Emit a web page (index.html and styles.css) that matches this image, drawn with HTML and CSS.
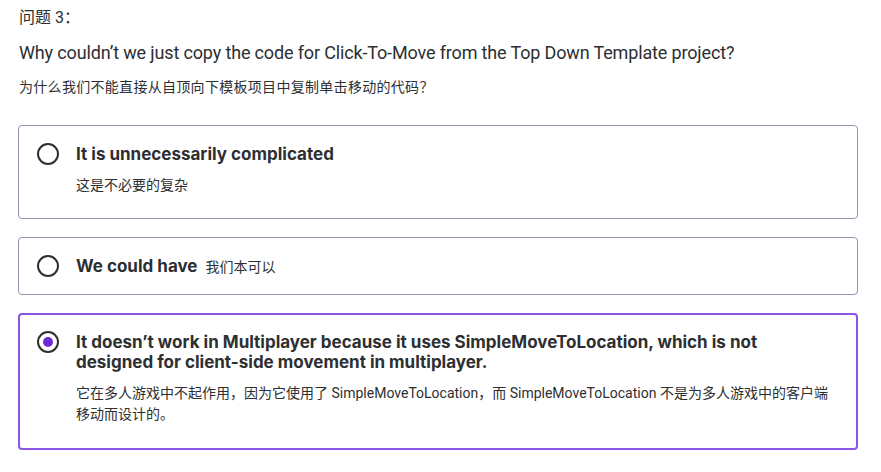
FILE: index.html
```html
<!DOCTYPE html>
<html lang="zh">
<head>
<meta charset="utf-8">
<link rel="stylesheet" href="styles.css">
</head>
<body>
<div class="quiz">
  <div class="q-label">问题 3：</div>
  <div class="q-title">Why couldn’t we just copy the code for Click-To-Move from the Top Down Template project?</div>
  <div class="q-sub">为什么我们不能直接从自顶向下模板项目中复制单击移动的代码？</div>

  <div class="answers">
    <div class="card">
      <span class="radio"></span>
      <div class="body">
        <div class="ans">It is unnecessarily complicated</div>
        <div class="tr tr-block">这是不必要的复杂</div>
      </div>
    </div>
    <div class="card">
      <span class="radio"></span>
      <div class="body">
        <div class="ans">We could have <span class="tr tr-inline">我们本可以</span></div>
      </div>
    </div>
    <div class="card selected">
      <span class="radio checked"></span>
      <div class="body">
        <div class="ans">It doesn’t work in Multiplayer because it uses SimpleMoveToLocation, which is not designed for client-side movement in multiplayer.</div>
        <div class="tr tr-block">它在多人游戏中不起作用，因为它使用了 SimpleMoveToLocation，而 SimpleMoveToLocation 不是为多人游戏中的客户端移动而设计的。</div>
      </div>
    </div>
  </div>
</div>
</body>
</html>
```
FILE: styles.css
```css
html, body {
  margin: 0;
  padding: 0;
  background: #ffffff;
}
body {
  font-family: Roboto, "Noto Sans CJK SC", sans-serif;
  color: #2d2f31;
}
.quiz {
  padding: 6px 23px 0 18px;
}
.q-label {
  font-size: 16px;
  line-height: 24px;
  padding-left: 1px;
}
.q-title {
  font-size: 18px;
  line-height: 26px;
  margin-top: 10px;
  padding-left: 1px;
  letter-spacing: -0.15px;
}
.q-sub {
  font-size: 14px;
  line-height: 20px;
  margin-top: 11px;
  padding-left: 1px;
  letter-spacing: 0.3px;
}
.answers {
  margin-top: 28px;
  display: flex;
  flex-direction: column;
  gap: 18px;
}
.card {
  display: flex;
  align-items: flex-start;
  border: 1px solid #9194ac;
  border-radius: 4px;
  padding: 18px 18px 17px 18px;
}
.card.selected {
  border: 2px solid #8a56e6;
  padding: 17px 17px 18px 17px;
}
.radio {
  flex: none;
  box-sizing: border-box;
  width: 22px;
  height: 22px;
  border: 2px solid #2d2f31;
  border-radius: 50%;
  margin-top: -1px;
  display: flex;
  align-items: center;
  justify-content: center;
}
.radio.checked::after {
  content: "";
  width: 10px;
  height: 10px;
  border-radius: 50%;
  background: #6d28d2;
}
.body {
  margin-left: 17px;
  flex: 1;
}
.ans {
  font-family: Inter, "Noto Sans CJK SC", sans-serif;
  font-weight: 700;
  font-size: 17px;
  line-height: 20px;
  color: #2d2f31;
  padding-right: 40px;
}
.tr {
  font-family: Roboto, "Noto Sans CJK SC", sans-serif;
  font-weight: 400;
  font-size: 14px;
  color: #2d2f31;
}
.tr-block {
  line-height: 21px;
  margin-top: 11px;
  margin-bottom: 5px;
}
.tr-inline {
  margin-left: 4px;
}
```
